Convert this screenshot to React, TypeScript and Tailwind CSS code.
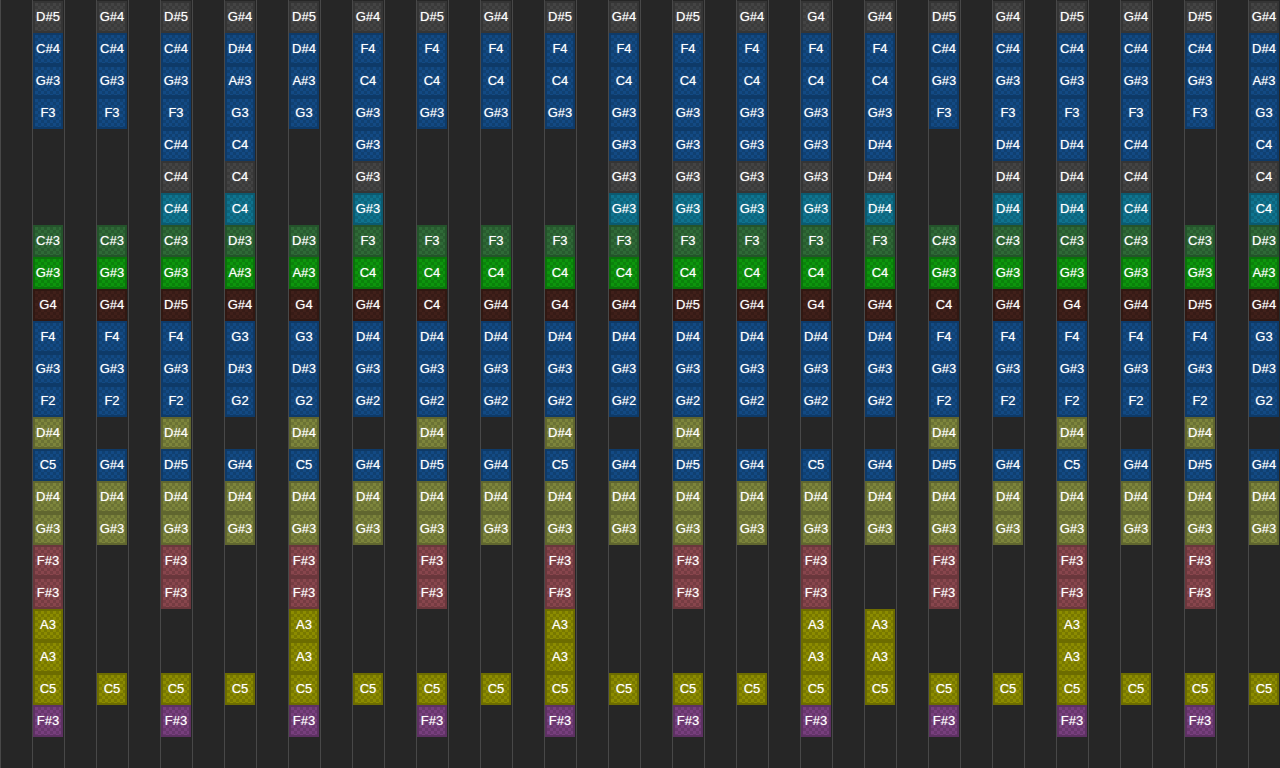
const rows: [string, string[]][] = [
  ["gray", "D#5 G#4 D#5 G#4 D#5 G#4 D#5 G#4 D#5 G#4 D#5 G#4 G4 G#4 D#5 G#4 D#5 G#4 D#5 G#4".split(" ")],
  ["blue", "C#4 C#4 C#4 D#4 D#4 F4 F4 F4 F4 F4 F4 F4 F4 F4 C#4 C#4 C#4 C#4 C#4 D#4".split(" ")],
  ["blue", "G#3 G#3 G#3 A#3 A#3 C4 C4 C4 C4 C4 C4 C4 C4 C4 G#3 G#3 G#3 G#3 G#3 A#3".split(" ")],
  ["blue", "F3 F3 F3 G3 G3 G#3 G#3 G#3 G#3 G#3 G#3 G#3 G#3 G#3 F3 F3 F3 F3 F3 G3".split(" ")],
  ["blue", "- - C#4 C4 - G#3 - - - G#3 G#3 G#3 G#3 D#4 - D#4 D#4 C#4 - C4".split(" ")],
  ["gray", "- - C#4 C4 - G#3 - - - G#3 G#3 G#3 G#3 D#4 - D#4 D#4 C#4 - C4".split(" ")],
  ["teal", "- - C#4 C4 - G#3 - - - G#3 G#3 G#3 G#3 D#4 - D#4 D#4 C#4 - C4".split(" ")],
  ["dkgreen", "C#3 C#3 C#3 D#3 D#3 F3 F3 F3 F3 F3 F3 F3 F3 F3 C#3 C#3 C#3 C#3 C#3 D#3".split(" ")],
  ["green", "G#3 G#3 G#3 A#3 A#3 C4 C4 C4 C4 C4 C4 C4 C4 C4 G#3 G#3 G#3 G#3 G#3 A#3".split(" ")],
  ["brown", "G4 G#4 D#5 G#4 G4 G#4 C4 G#4 G4 G#4 D#5 G#4 G4 G#4 C4 G#4 G4 G#4 D#5 G#4".split(" ")],
  ["blue", "F4 F4 F4 G3 G3 D#4 D#4 D#4 D#4 D#4 D#4 D#4 D#4 D#4 F4 F4 F4 F4 F4 G3".split(" ")],
  ["blue", "G#3 G#3 G#3 D#3 D#3 G#3 G#3 G#3 G#3 G#3 G#3 G#3 G#3 G#3 G#3 G#3 G#3 G#3 G#3 D#3".split(" ")],
  ["blue", "F2 F2 F2 G2 G2 G#2 G#2 G#2 G#2 G#2 G#2 G#2 G#2 G#2 F2 F2 F2 F2 F2 G2".split(" ")],
  ["olive", "D#4 - D#4 - D#4 - D#4 - D#4 - D#4 - - - D#4 - D#4 - D#4 -".split(" ")],
  ["blue", "C5 G#4 D#5 G#4 C5 G#4 D#5 G#4 C5 G#4 D#5 G#4 C5 G#4 D#5 G#4 C5 G#4 D#5 G#4".split(" ")],
  ["olive", Array(20).fill("D#4")],
  ["olive", Array(20).fill("G#3")],
  ["red", "F#3 - F#3 - F#3 - F#3 - F#3 - F#3 - F#3 - F#3 - F#3 - F#3 -".split(" ")],
  ["red", "F#3 - F#3 - F#3 - F#3 - F#3 - F#3 - F#3 - F#3 - F#3 - F#3 -".split(" ")],
  ["yellow", "A3 - - - A3 - - - A3 - - - A3 A3 - - A3 - - -".split(" ")],
  ["yellow", "A3 - - - A3 - - - A3 - - - A3 A3 - - A3 - - -".split(" ")],
  ["yellow", Array(20).fill("C5")],
  ["purple", "F#3 - F#3 - F#3 - F#3 - F#3 - F#3 - F#3 - F#3 - F#3 - F#3 -".split(" ")],
];

const tones: Record<string, string> = {
  gray: "bg-[#444444] border-[#353535]",
  blue: "bg-[#134a84] border-[#0e3a68]",
  teal: "bg-[#0f7490] border-[#0b5a70]",
  dkgreen: "bg-[#2f6a37] border-[#24532b]",
  green: "bg-[#0d960d] border-[#0a740a]",
  brown: "bg-[#40201a] border-[#311812]",
  olive: "bg-[#7d853c] border-[#60662f]",
  red: "bg-[#88464d] border-[#6a373c]",
  yellow: "bg-[#8c8c00] border-[#6c6c00]",
  purple: "bg-[#783f7e] border-[#5d3162]",
};

function Note({ tone, label }: { tone: string; label: string }) {
  if (label === "-") return <div className="h-8 w-[30px]" />;
  return (
    <div
      className={`flex h-8 w-[30px] items-center justify-center border-2 bg-clip-padding bg-[conic-gradient(rgba(0,0,0,0.14)_25%,transparent_0_50%,rgba(0,0,0,0.14)_0_75%,transparent_0)] bg-[length:6px_6px] pb-[2px] text-[13px] leading-none text-white [text-shadow:0_0_1px_rgba(255,255,255,0.6)] ${tones[tone]}`}
    >
      {label}
    </div>
  );
}

export default function App() {
  return (
    <div className="flex h-[768px] w-[1280px] overflow-hidden bg-[#262626] font-['Liberation_Sans',sans-serif]">
      {Array.from({ length: 20 }, (_, c) => (
        <div key={c} className="flex">
          <div className="h-full w-8 border-l border-[#484848]" />
          <div className="flex h-full w-8 flex-col border-l border-[#484848] pt-px">
            {rows.map(([tone, labels], r) => (
              <Note key={r} tone={tone} label={labels[c]} />
            ))}
          </div>
        </div>
      ))}
    </div>
  );
}
